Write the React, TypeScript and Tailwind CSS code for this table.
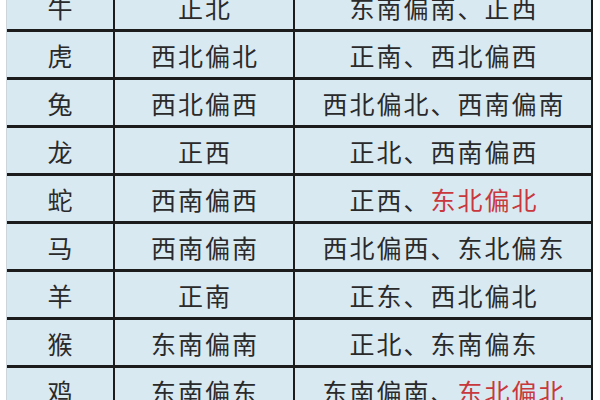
import React from "react"

type Row = { animal: string; main: string; good: [string, string]; red?: boolean }

const rows: Row[] = [
  { animal: "牛", main: "正北", good: ["东南偏南", "正西"] },
  { animal: "虎", main: "西北偏北", good: ["正南", "西北偏西"] },
  { animal: "兔", main: "西北偏西", good: ["西北偏北", "西南偏南"] },
  { animal: "龙", main: "正西", good: ["正北", "西南偏西"] },
  { animal: "蛇", main: "西南偏西", good: ["正西", "东北偏北"], red: true },
  { animal: "马", main: "西南偏南", good: ["西北偏西", "东北偏东"] },
  { animal: "羊", main: "正南", good: ["正东", "西北偏北"] },
  { animal: "猴", main: "东南偏南", good: ["正北", "东南偏东"] },
  { animal: "鸡", main: "东南偏东", good: ["东南偏南", "东北偏北"], red: true },
]

const font = { fontFamily: '"Noto Sans CJK SC", "Noto Sans", sans-serif' }

export default function App() {
  return (
    <div className="w-[600px] h-[400px] overflow-hidden bg-white" style={font}>
      <div className="ml-[6px] mt-[-16px] w-[587px] border-l border-[#cdd5da] bg-[#d9e9f2] text-[25px] tracking-[2px] text-[#2a2a2a]">
        {rows.map((row) => (
          <div key={row.animal} className="flex h-[48px] border-b-[3px] border-[#1c1c1c]">
            <div className="w-[108px] shrink-0 border-r-2 border-[#1c1c1c] flex items-center justify-center pl-[2px] pt-[3px]">
              {row.animal}
            </div>
            <div className="w-[180px] shrink-0 border-r-2 border-[#1c1c1c] flex items-center justify-center pl-[2px] pt-[3px]">
              {row.main}
            </div>
            <div className="w-[298px] shrink-0 border-r-2 border-[#1c1c1c] flex items-center justify-center pl-[2px] pt-[3px]">
              <span>{row.good[0]}、</span>
              <span className={row.red ? "text-[#c8383c]" : ""}>{row.good[1]}</span>
            </div>
          </div>
        ))}
      </div>
    </div>
  )
}
